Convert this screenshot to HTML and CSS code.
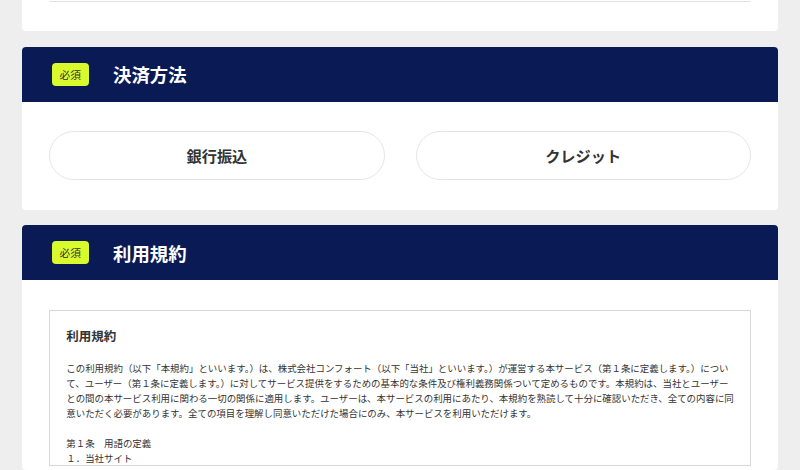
FILE: index.html
```html
<!DOCTYPE html>
<html lang="ja">
<head>
  <meta charset="UTF-8" />
  <title>お申し込み</title>
  <link rel="stylesheet" href="styles.css">
</head>
<body>

  <section class="card card-cut">
    <div class="cut-box"></div>
  </section>

  <section class="card">
    <div class="card-head">
      <span class="badge">必須</span>
      <h2 class="card-title">決済方法</h2>
    </div>
    <div class="pay-body">
      <button class="pay-button">銀行振込</button>
      <button class="pay-button">クレジット</button>
    </div>
  </section>

  <section class="card">
    <div class="card-head">
      <span class="badge">必須</span>
      <h2 class="card-title">利用規約</h2>
    </div>
    <div class="terms-body">
      <div class="terms-box">
        <h3 class="terms-title">利用規約</h3>
        <p class="terms-text">この利用規約（以下「本規約」といいます。）は、株式会社コンフォート（以下「当社」といいます。）が運営する本サービス（第１条に定義します。）について、ユーザー（第１条に定義します。）に対してサービス提供をするための基本的な条件及び権利義務関係ついて定めるものです。本規約は、当社とユーザーとの間の本サービス利用に関わる一切の関係に適用します。ユーザーは、本サービスの利用にあたり、本規約を熟読して十分に確認いただき、全ての内容に同意いただく必要があります。全ての項目を理解し同意いただけた場合にのみ、本サービスを利用いただけます。</p>
        <p class="terms-text">第１条　用語の定義<br>１．当社サイト</p>
      </div>
    </div>
  </section>

</body>
</html>
```

FILE: styles.css
```css
html,
body {
  height: 100%;
}

body {
  font-family: "Noto Sans CJK JP", "Noto Sans", sans-serif;
  margin: 0;
  padding: 0 22px;
  background: #eeeeee;
  color: #333;
  overflow: hidden;
  display: flex;
  flex-direction: column;
  gap: 15.4px;
}

.card {
  flex: none;
  background: #fff;
  border-radius: 4px;
  overflow: hidden;
}

.card-cut {
  height: 31.4px;
  border-radius: 0 0 4px 4px;
  padding: 0 27.3px;
}

.cut-box {
  height: 1px;
  border-bottom: 1px solid #e2e2e2;
  border-radius: 0 0 4px 4px;
}

.card-head {
  height: 55.3px;
  background: #0a1a54;
  display: flex;
  align-items: center;
  padding-left: 29.7px;
  gap: 24.4px;
}

.badge {
  width: 37px;
  height: 23px;
  background: #d9fb2e;
  border-radius: 4px;
  color: #333;
  font-size: 10.7px;
  line-height: 23px;
  text-align: center;
}

.card-title {
  margin: 0;
  color: #fff;
  font-size: 18.4px;
  font-weight: 700;
}

.pay-body {
  display: flex;
  gap: 31px;
  padding: 29px 27.3px 29.9px;
}

.pay-button {
  flex: 1;
  height: 48.7px;
  background: #fff;
  border: 1px solid #e4e4e4;
  border-radius: 25px;
  color: #333;
  font-family: inherit;
  font-size: 15.2px;
  font-weight: 700;
}

.terms-body {
  padding: 30px 27.3px 3.5px;
}

.terms-box {
  height: 156px;
  box-sizing: border-box;
  border: 1px solid #d8d8d8;
  padding: 14.5px 14.5px 0 16px;
  overflow: hidden;
}

.terms-title {
  margin: 0 0 15px;
  font-size: 12.5px;
  line-height: 20px;
  font-weight: 700;
}

.terms-text {
  margin: 0 0 15px;
  font-size: 9.45px;
  line-height: 15px;
}
```
